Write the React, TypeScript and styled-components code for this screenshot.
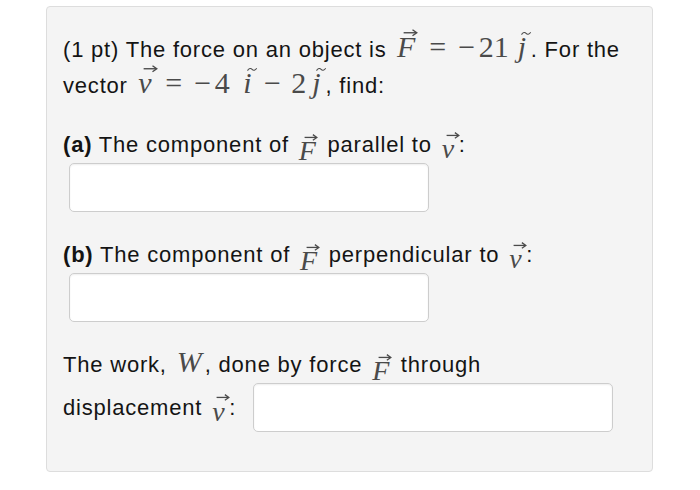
import { FC, ReactNode } from "react";
import styled, { createGlobalStyle } from "styled-components";

const GlobalStyle = createGlobalStyle`
    html, body {
        margin: 0;
        padding: 0;
        background: #ffffff;
    }
    body {
        font-family: "Liberation Sans", Arial, sans-serif;
        color: #141414;
    }
`;

const Page = styled.div`
    width: 700px;
    height: 490px;
    padding: 6px 0 0 46px;
    box-sizing: border-box;
`;

const Panel = styled.div`
    width: 607px;
    height: 466px;
    box-sizing: border-box;
    background: #f4f4f4;
    border: 1px solid #dddddd;
    border-radius: 4px;
    padding: 25px 8px 0 16px;
    font-size: 22px;
    letter-spacing: 0.8px;
`;

const Intro = styled.p`
    margin: 0;
    line-height: 36px;
    white-space: nowrap;
`;

const Question = styled.div<{ $top: number }>`
    margin-top: ${({ $top }) => $top}px;
    display: flex;
    flex-direction: column;
    align-items: flex-start;
`;

const Label = styled.div`
    line-height: 28px;
    white-space: nowrap;
`;

const Answer = styled.input<{ $inline?: boolean }>`
    margin: ${({ $inline }) => ($inline ? "0" : "4px 0 0 6px")};
    width: 360px;
    height: 49px;
    box-sizing: border-box;
    background: #fff;
    border: 1px solid #cdcdcd;
    border-radius: 5px;
    box-shadow: inset 0 1px 2px rgba(0, 0, 0, 0.07);
    outline: none;
`;

const WorkRow = styled.div`
    display: flex;
    align-items: center;
    margin-top: 4px;
    gap: 17px;
    line-height: 28px;
    white-space: nowrap;
`;

const Math = styled.span<{ $size?: number; $drop?: number }>`
    font-family: "Liberation Serif", "DejaVu Serif", serif;
    font-size: ${({ $size }) => $size ?? 28}px;
    letter-spacing: 0;
    line-height: 0;
    color: #4a4a4a;
    position: relative;
    top: ${({ $drop }) => $drop ?? 0}px;
    margin: 0 3px;
`;

const MathIt = styled.span`
    font-style: italic;
`;

const MathOp = styled.span<{ $space?: number }>`
    margin: 0 ${({ $space }) => $space ?? 0.4}em;
`;

const Minus = styled.span`
    margin-right: 0.12em;
`;

const MathNum = styled.span<{ $gap?: number }>`
    margin-right: ${({ $gap }) => $gap ?? 0.2}em;
`;

const Accented = styled.span`
    position: relative;
    font-style: italic;
    padding-right: 0.06em;
`;

const ArrowMark = styled.svg`
    position: absolute;
    left: 30%;
    top: -0.08em;
    width: 0.5em;
    height: 0.3em;
    overflow: visible;
`;

const TildeMark = styled.svg`
    position: absolute;
    left: 0.12em;
    top: 0.02em;
    width: 0.34em;
    height: 0.16em;
    overflow: visible;
`;

const Vec: FC<{ children: ReactNode }> = ({ children }) => (
    <Accented>
        {children}
        <ArrowMark viewBox="0 0 12 6">
            <path d="M0.5 3.2 H10.5" stroke="#4a4a4a" strokeWidth="1.1" />
            <path d="M7.6 0.8 L11 3.2 L7.6 5.6" stroke="#4a4a4a" strokeWidth="1.1" fill="none" />
        </ArrowMark>
    </Accented>
);

const Unit: FC<{ children: ReactNode }> = ({ children }) => (
    <Accented>
        {children}
        <TildeMark viewBox="0 0 10 4">
            <path d="M0.5 3.2 C2 0.6 4 0.8 5 2 C6 3.2 8 3.4 9.5 0.8" stroke="#4a4a4a" strokeWidth="1" fill="none" />
        </TildeMark>
    </Accented>
);

const Bold = styled.b`
    font-weight: 700;
`;

const App: FC = () => {
    return (
        <Page>
            <GlobalStyle />
            <Panel>
                <Intro>
                    (1 pt) The force on an object is
                    <Math $size={30}>
                        {" "}<Vec>F</Vec>
                        <MathOp>=</MathOp>
                        <Minus>−</Minus>
                        <MathNum $gap={0.3}>21</MathNum>
                        <Unit>j</Unit>
                    </Math>
                    . For the
                    <br />
                    vector
                    <Math $size={30}>
                        {" "}<Vec>v</Vec>
                        <MathOp>=</MathOp>
                        <Minus>−</Minus>
                        <MathNum $gap={0.45}>4</MathNum>
                        <Unit>i</Unit>
                        <MathOp $space={0.35}>−</MathOp>
                        <MathNum>2</MathNum>
                        <Unit>j</Unit>
                    </Math>
                    , find:
                </Intro>

                <Question $top={27}>
                    <Label>
                        <Bold>(a)</Bold> The component of <Math $drop={8}><Vec>F</Vec></Math> parallel to{" "}
                        <Math $drop={6}><Vec>v</Vec></Math>:
                    </Label>
                    <Answer type="text" />
                </Question>

                <Question $top={29}>
                    <Label>
                        <Bold>(b)</Bold> The component of <Math $drop={8}><Vec>F</Vec></Math> perpendicular to{" "}
                        <Math $drop={6}><Vec>v</Vec></Math>:
                    </Label>
                    <Answer type="text" />
                </Question>

                <Question $top={29}>
                    <Label>
                        The work, <Math $size={30}><MathIt>W</MathIt></Math>, done by force{" "}
                        <Math $drop={8}><Vec>F</Vec></Math> through
                    </Label>
                    <WorkRow>
                        <span>
                            displacement <Math $drop={6}><Vec>v</Vec></Math>:
                        </span>
                        <Answer type="text" $inline />
                    </WorkRow>
                </Question>
            </Panel>
        </Page>
    );
};

export default App;
